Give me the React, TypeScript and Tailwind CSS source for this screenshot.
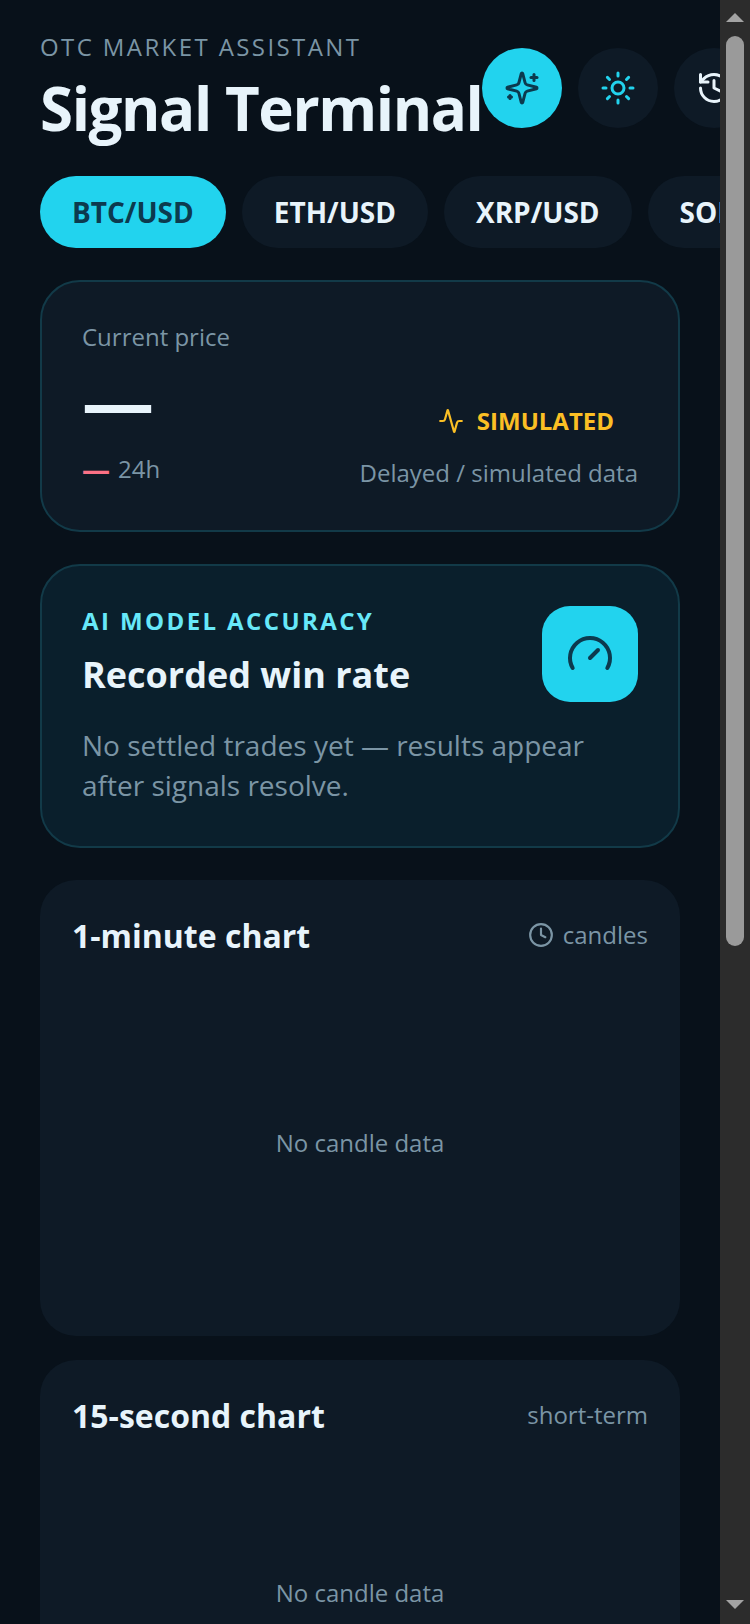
import React from "react";
import { Activity, Clock, Gauge, History, Sun } from "lucide-react";

const pairs = ["BTC/USD", "ETH/USD", "XRP/USD", "SOL/USD"];

function SparkIcon() {
  return (
    <svg width="36" height="36" viewBox="0 0 24 24" fill="none" stroke="currentColor" strokeWidth="2" strokeLinecap="round" strokeLinejoin="round">
      <path d="M9.937 15.5A2 2 0 0 0 8.5 14.063l-6.135-1.582a.5.5 0 0 1 0-.962L8.5 9.936A2 2 0 0 0 9.937 8.5l1.582-6.135a.5.5 0 0 1 .963 0L14.063 8.5A2 2 0 0 0 15.5 9.937l6.135 1.581a.5.5 0 0 1 0 .964L15.5 14.063a2 2 0 0 0-1.437 1.437l-1.582 6.135a.5.5 0 0 1-.963 0z" />
      <path d="M20 3v4" />
      <path d="M22 5h-4" />
      <path d="M4 17v2" />
      <path d="M5 18H3" />
    </svg>
  );
}

function ChartCard({ title, note, plot, icon }: { title: string; note: string; plot: string; icon?: boolean }) {
  return (
    <section className="shrink-0 rounded-[36px] bg-[#0e1a26] p-8">
      <div className="flex items-center justify-between">
        <h2 className="text-[32px] leading-[48px] font-bold text-[#e8f4fb]">{title}</h2>
        <span className="flex items-center gap-[9px] pb-[2px] text-[24px] text-[#7b95a5]">
          {icon && <Clock size={26} strokeWidth={2} />}
          {note}
        </span>
      </div>
      <div className={`mt-6 flex items-center justify-center pb-[2px] text-[24px] text-[#7b95a5] ${plot}`}>No candle data</div>
    </section>
  );
}

export default function App() {
  return (
    <div className="flex h-[1624px] overflow-hidden bg-[#2c2c2c] font-['Open_Sans',sans-serif]">
      <main className="flex w-[720px] shrink-0 flex-col overflow-hidden bg-[#08111a] px-10 pt-8">
        <header className="flex items-center">
          <div className="shrink-0">
            <p className="text-[24px] leading-[30px] tracking-[2.4px] text-[#7b95a5]">OTC MARKET ASSISTANT</p>
            <h1 className="mt-[10px] text-[60px] leading-[72px] font-bold tracking-[-1.4px] whitespace-nowrap text-[#e8f4fb]">Signal Terminal</h1>
          </div>
          <div className="flex shrink-0 gap-4">
            <button className="flex h-20 w-20 items-center justify-center rounded-full bg-[#22d3ee] text-[#0c3a4e]">
              <SparkIcon />
            </button>
            <button className="flex h-20 w-20 items-center justify-center rounded-full bg-[#0e1a26] text-[#22d3ee]">
              <Sun size={36} />
            </button>
            <button className="flex h-20 w-20 items-center justify-center rounded-full bg-[#0e1a26] text-[#e8f4fb]">
              <History size={36} />
            </button>
          </div>
        </header>

        <div className="mt-8 flex gap-4">
          {pairs.map((p, i) => (
            <button
              key={p}
              className={
                i === 0
                  ? "h-[72px] shrink-0 rounded-full bg-[#22d3ee] px-8 text-[28px] font-bold text-[#0c3a4e]"
                  : "h-[72px] shrink-0 rounded-full bg-[#0e1a26] px-8 text-[28px] font-bold text-[#e8f4fb]"
              }
            >
              {p}
            </button>
          ))}
        </div>

        <section className="mt-8 flex h-[252px] shrink-0 items-end justify-between rounded-[40px] border-2 border-[#123a48] bg-[#0e1a26] p-10">
          <div className="mb-[5px]">
            <p className="text-[24px] leading-[30px] text-[#7b95a5]">Current price</p>
            <p className="mt-[8px] text-[72px] leading-[80px] font-bold text-[#e8f4fb]">—</p>
            <p className="mt-[13px] flex items-center gap-2 text-[24px] leading-[32px] text-[#7b95a5]">
              <span className="text-[28px] font-bold text-[#fb7185]">—</span> 24h
            </p>
          </div>
          <div className="mb-px flex flex-col items-end gap-5">
            <span className="flex items-center gap-[13px] px-6 text-[24px] leading-[32px] font-bold text-[#fbbf24]">
              <Activity size={26} strokeWidth={2} />
              SIMULATED
            </span>
            <span className="text-[24px] leading-[32px] text-[#7b95a5]">Delayed / simulated data</span>
          </div>
        </section>

        <section className="mt-8 shrink-0 rounded-[40px] border-2 border-[#123a48] bg-[#0a1f2c] p-10">
          <div className="flex items-start justify-between">
            <div>
              <p className="text-[24px] leading-[30px] font-bold tracking-[2.4px] text-[#67e8f9]">AI MODEL ACCURACY</p>
              <h2 className="mt-[16px] text-[36px] leading-[45px] font-bold text-[#e8f4fb]">Recorded win rate</h2>
            </div>
            <div className="flex h-24 w-24 shrink-0 items-center justify-center rounded-[28px] bg-[#22d3ee] text-[#0c3a4e]">
              <Gauge size={48} />
            </div>
          </div>
          <p className="mt-[23px] pb-px text-[28px] leading-[40px] text-[#7b95a5]">No settled trades yet — results appear after signals resolve.</p>
        </section>

        <div className="mt-8 flex flex-col gap-6">
          <ChartCard title="1-minute chart" note="candles" icon plot="h-[320px]" />
          <ChartCard title="15-second chart" note="short-term" plot="h-[260px]" />
        </div>
      </main>

      <aside className="flex w-[30px] shrink-0 flex-col items-center">
        <svg className="mt-[13px]" width="18" height="9" viewBox="0 0 18 9"><path d="M9 0l9 9H0z" fill="#a3a3a3" /></svg>
        <div className="mt-[14px] h-[910px] w-[18px] rounded-[9px] bg-[#9a9a9a]" />
        <svg className="mt-auto mb-[15px]" width="18" height="9" viewBox="0 0 18 9"><path d="M0 0h18L9 9z" fill="#a3a3a3" /></svg>
      </aside>
    </div>
  );
}
